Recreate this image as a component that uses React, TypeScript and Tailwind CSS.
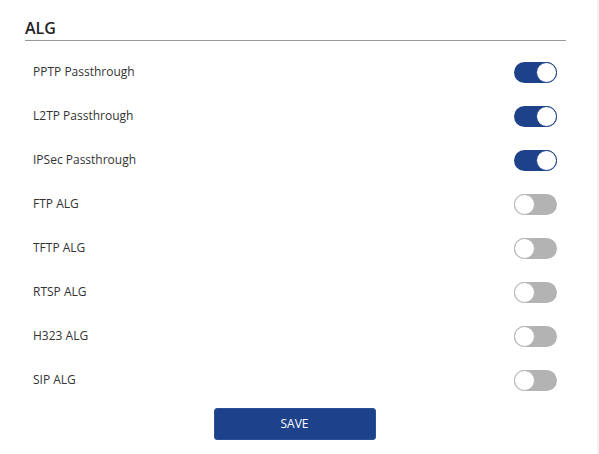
import React, { useState } from "react";

const items: { label: string; on: boolean }[] = [
  { label: "PPTP Passthrough", on: true },
  { label: "L2TP Passthrough", on: true },
  { label: "IPSec Passthrough", on: true },
  { label: "FTP ALG", on: false },
  { label: "TFTP ALG", on: false },
  { label: "RTSP ALG", on: false },
  { label: "H323 ALG", on: false },
  { label: "SIP ALG", on: false },
];

function Toggle({ on, onClick }: { on: boolean; onClick: () => void }) {
  return (
    <button
      onClick={onClick}
      className={
        on
          ? "relative w-[43px] h-[21px] rounded-full bg-[#1d428a] flex items-center justify-end"
          : "relative w-[43px] h-[21px] rounded-full bg-[#b3b3b3] flex items-center justify-start"
      }
    >
      <span
        className={
          on
            ? "block w-[21px] h-[21px] rounded-full bg-white border border-[#1d428a]"
            : "block w-[21px] h-[21px] rounded-full bg-white border border-[#b3b3b3]"
        }
      />
    </button>
  );
}

export default function App() {
  const [state, setState] = useState(items.map((i) => i.on));
  return (
    <div
      className="w-[599px] h-[454px] bg-white flex border-r-2 border-[#f3f3f3]"
      style={{ fontFamily: '"Segoe UI", "Open Sans", "Noto Sans", sans-serif' }}
    >
      <div className="w-[541px] ml-[25px] flex flex-col">
        <div className="h-[41px] border-b border-[#999999] flex items-start pt-[17px]">
          <span className="text-[16px] leading-[22px] font-semibold text-[#222222]">ALG</span>
        </div>
        <div className="mt-[9px] flex flex-col">
          {items.map((it, i) => (
            <div key={it.label} className="h-[44px] flex items-center justify-between pl-[8px] pr-[9px]">
              <span className="text-[12px] text-[#333333]">{it.label}</span>
              <Toggle
                on={state[i]}
                onClick={() => setState((s) => s.map((v, j) => (j === i ? !v : v)))}
              />
            </div>
          ))}
        </div>
        <div className="mt-[6px] flex justify-center">
          <button className="w-[162px] h-[32px] rounded-[3px] bg-[#1d428a] text-white text-[12px] border border-[#2a5298] -translate-x-[1px]">
            SAVE
          </button>
        </div>
      </div>
    </div>
  );
}
